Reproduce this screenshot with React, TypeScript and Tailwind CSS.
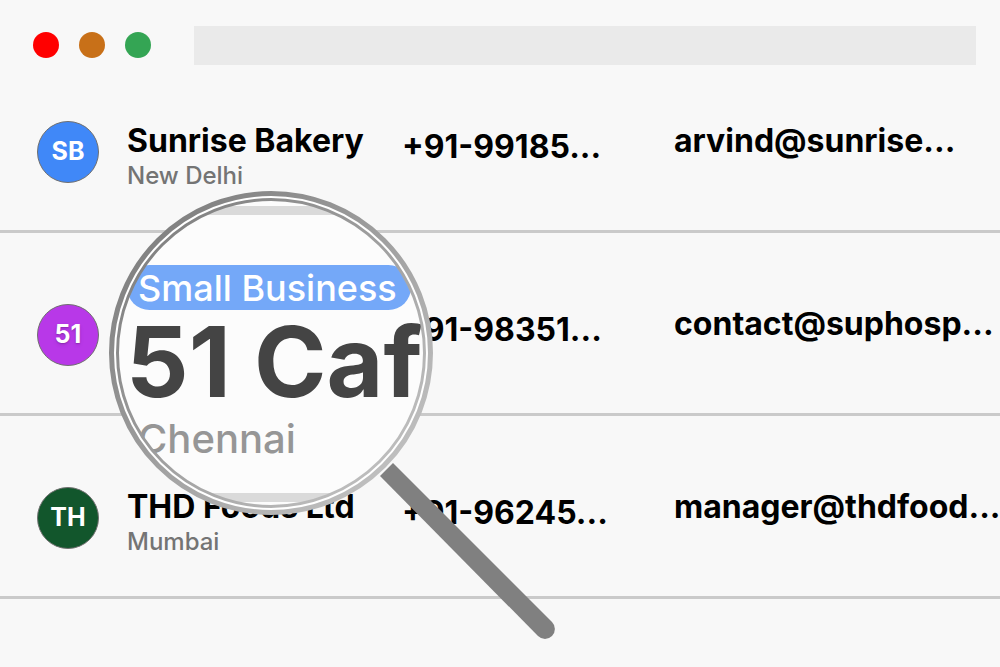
import React from 'react';

interface Business {
  initials: string;
  name?: string;
  city?: string;
  phone: string;
  email: string;
  color: string;
}

// The second row's name and city are shown enlarged inside the magnifier
const businesses: Business[] = [
  {
    initials: 'SB',
    name: 'Sunrise Bakery',
    city: 'New Delhi',
    phone: '+91-99185...',
    email: 'arvind@sunrise...',
    color: 'bg-[#4088f8]',
  },
  {
    initials: '51',
    phone: '+91-98351...',
    email: 'contact@suphosp...',
    color: 'bg-[#b838e8] text-shadow-md',
  },
  {
    initials: 'TH',
    name: 'THD Foods Ltd',
    city: 'Mumbai',
    phone: '+91-96245...',
    email: 'manager@thdfood...',
    color: 'bg-[#12562c]',
  },
];

const WindowBar: React.FC = () => (
  <header className="flex items-start pt-[26px] pl-[33px] pr-6">
    <div className="flex shrink-0 gap-5 pt-[6px]">
      <span className="size-[26px] rounded-full bg-[#ff0000]" />
      <span className="size-[26px] rounded-full bg-[#c87018]" />
      <span className="size-[26px] rounded-full bg-[#34a554]" />
    </div>
    <div className="ml-[43px] h-[39px] flex-1 bg-[#eaeaea]" />
  </header>
);

const BusinessRow: React.FC<{ business: Business }> = ({ business }) => (
  <tr className="h-[183px] align-bottom whitespace-nowrap first:h-[168px] *:border-b-3 *:border-[#cacaca]">
    <td className="pb-[47px] pl-[37px]">
      <div
        className={`flex size-[62px] items-center justify-center rounded-full border border-[#707070] text-[25px] font-bold text-white ${business.color}`}
      >
        {business.initials}
      </div>
    </td>
    <td className="pb-10">
      <div className="text-[32px] leading-[42px] font-bold">{business.name}</div>
      <div className="text-2xl leading-7 font-medium text-[#747474]">{business.city}</div>
    </td>
    <td className="pb-[63px] text-[32px] leading-10 font-bold">{business.phone}</td>
    <td className="overflow-hidden pb-[69px] text-[32px] leading-10 font-bold">{business.email}</td>
  </tr>
);

const Magnifier: React.FC = () => (
  <div className="absolute top-[191px] left-[109px] size-[324px]">
    <div className="absolute inset-1 flex flex-col overflow-hidden rounded-full bg-[#fcfcfc] pt-[11px]">
      <div className="h-[9px] shrink-0 bg-[#dadada]" />
      <div className="mt-[50px] ml-[14px] flex h-[45px] w-[284px] shrink-0 items-center rounded-full bg-[#74a8f8] pl-[11px] text-4xl font-medium whitespace-nowrap text-white">
        Small Business
      </div>
      <div className="ml-[13px] h-[104px] text-[98px] leading-[104px] font-bold whitespace-nowrap text-[#444444]">
        51 Caf
      </div>
      <div className="ml-[25px] h-[50px] text-[40px] leading-[50px] font-medium text-[#969696]">Chennai</div>
      <div className="mt-[29px] h-[9px] shrink-0 bg-[#dadada]" />
    </div>
    <svg className="absolute inset-0 overflow-visible" width="324" height="324" viewBox="0 0 324 324" fill="none">
      <defs>
        <linearGradient id="rim" x1="40" y1="40" x2="284" y2="284" gradientUnits="userSpaceOnUse">
          <stop stopColor="#808080" />
          <stop offset="1" stopColor="#c0c0c0" />
        </linearGradient>
      </defs>
      <circle cx="162" cy="162" r="156" stroke="#ffffff" strokeWidth="6" />
      <circle cx="162" cy="162" r="159.5" stroke="url(#rim)" strokeWidth="5" />
      <circle cx="162" cy="162" r="153.5" stroke="url(#rim)" strokeWidth="3" />
      <path d="M284 272L443 431A9.5 9.5 0 0 1 429 445L271 285Z" fill="#808080" />
    </svg>
  </div>
);

const App: React.FC = () => {
  return (
    <main className="relative min-h-screen overflow-hidden bg-[#f8f8f8] font-['Inter',sans-serif] text-black">
      <WindowBar />
      <table className="w-full table-fixed border-separate border-spacing-0">
        <colgroup>
          <col className="w-[127px]" />
          <col className="w-[275px]" />
          <col className="w-[272px]" />
          <col />
        </colgroup>
        <tbody>
          {businesses.map((business) => (
            <BusinessRow key={business.initials} business={business} />
          ))}
        </tbody>
      </table>
      <Magnifier />
    </main>
  );
};

export default App;
